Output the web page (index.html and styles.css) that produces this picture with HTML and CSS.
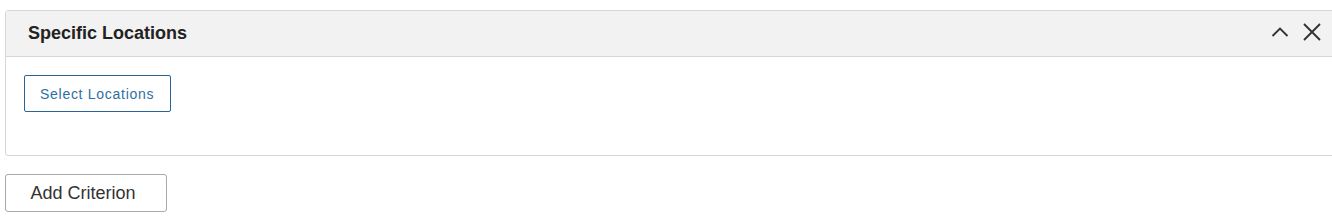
FILE: index.html
```html
<!DOCTYPE html>
<html lang="en">
<head>
    <meta charset="UTF-8">
    <title>Specific Locations</title>
    <link rel="stylesheet" href="styles.css">
</head>
<body>
    <div class="panel">
        <div class="panel-header">
            <h2>Specific Locations</h2>
            <div class="panel-tools">
                <button class="icon-btn" title="Collapse">
                    <svg width="18" height="18" viewBox="0 0 18 18"><path d="M1.5 13 L9 5.5 L16.5 13" fill="none" stroke="#333" stroke-width="1.9"/></svg>
                </button>
                <button class="icon-btn" title="Remove">
                    <svg width="18" height="18" viewBox="0 0 18 18"><path d="M1 1 L17 17 M17 1 L1 17" fill="none" stroke="#333" stroke-width="1.9"/></svg>
                </button>
            </div>
        </div>
        <div class="panel-body">
            <button class="btn-outline">Select Locations</button>
        </div>
    </div>
    <button class="btn-default">Add Criterion</button>
</body>
</html>
```

FILE: styles.css
```css
body {
    margin: 0;
    padding: 10px 0 0 5px;
    font-family: "Liberation Sans", Arial, sans-serif;
    background-color: #fff;
    color: #333;
}
.panel {
    margin-right: -10px;
    border: 1px solid #d6d6d6;
    border-radius: 3px;
    background-color: #fff;
}
.panel-header {
    display: flex;
    align-items: center;
    justify-content: space-between;
    height: 45px;
    padding: 0 20px 0 22px;
    background-color: #f2f2f2;
    border-bottom: 1px solid #d6d6d6;
}
.panel-header h2 {
    margin: 0;
    font-size: 18px;
    font-weight: bold;
    color: #222;
}
.panel-tools {
    display: flex;
    gap: 14px;
    padding-bottom: 4px;
}
.icon-btn {
    background: none;
    border: none;
    padding: 0;
    width: 18px;
    height: 18px;
    display: flex;
    align-items: center;
    justify-content: center;
    cursor: pointer;
}
.panel-body {
    height: 98px;
    padding: 18px 18px 0 18px;
    box-sizing: border-box;
}
.btn-outline {
    height: 37px;
    padding: 0 16px 0 15px;
    background-color: #fff;
    border: 1px solid #2a6496;
    border-radius: 2px;
    color: #2f6f9f;
    font-family: "Liberation Sans", Arial, sans-serif;
    font-size: 14px;
    letter-spacing: 0.72px;
    cursor: pointer;
}
.btn-default {
    display: block;
    margin-top: 18px;
    width: 162px;
    height: 38px;
    padding: 0 6px 0 0;
    background-color: #fff;
    border: 1px solid #a8a8a8;
    border-radius: 3px;
    color: #333;
    font-family: "Liberation Sans", Arial, sans-serif;
    font-size: 18px;
    cursor: pointer;
}
```
